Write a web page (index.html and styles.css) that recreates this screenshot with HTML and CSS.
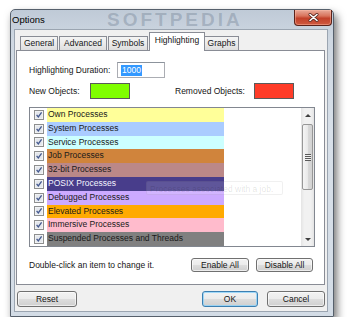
FILE: index.html
```html
<!DOCTYPE html>
<html>
<head>
<meta charset="utf-8">
<link rel="stylesheet" href="styles.css">
</head>
<body>
<div class="window">
  <div class="titlebar">
    <span class="title">Options</span>
    <span class="wm">SOFTPEDIA</span>
    <div class="close">
      <svg width="11" height="9" viewBox="0 0 11 9"><path d="M2 1.5 L9 7.5 M9 1.5 L2 7.5" stroke="#5a2a22" stroke-width="3" stroke-linecap="round"/><path d="M2 1.5 L9 7.5 M9 1.5 L2 7.5" stroke="#fff" stroke-width="1.6" stroke-linecap="round"/></svg>
    </div>
  </div>
  <div class="client">
    <div class="tabs">
      <div class="tab t-general">General</div>
      <div class="tab t-advanced">Advanced</div>
      <div class="tab t-symbols">Symbols</div>
      <div class="tab t-high active">Highlighting</div>
      <div class="tab t-graphs">Graphs</div>
    </div>
    <div class="panel">
      <div class="row1">
        <span class="lab lab-dur">Highlighting Duration:</span>
        <div class="input"><span class="sel">1000</span></div>
      </div>
      <div class="row2">
        <span class="lab lab-new">New Objects:</span>
        <span class="swatch green"></span>
        <span class="lab lab-rem">Removed Objects:</span>
        <span class="swatch red"></span>
      </div>
      <div class="list">
        <div class="items">
          <div class="item"><svg class="cb" viewBox="0 0 10 10"><rect x="0.5" y="0.5" width="9" height="9" fill="#fafafa" stroke="#8e8f8f"/><rect x="1.5" y="1.5" width="7" height="7" fill="#e4e7ec"/><path d="M2.6 4.8 L4.3 6.9 L7.6 2.4" stroke="#44598f" stroke-width="1.3" fill="none"/></svg><span class="lbl c1">Own Processes</span></div>
          <div class="item"><svg class="cb" viewBox="0 0 10 10"><rect x="0.5" y="0.5" width="9" height="9" fill="#fafafa" stroke="#8e8f8f"/><rect x="1.5" y="1.5" width="7" height="7" fill="#e4e7ec"/><path d="M2.6 4.8 L4.3 6.9 L7.6 2.4" stroke="#44598f" stroke-width="1.3" fill="none"/></svg><span class="lbl c2">System Processes</span></div>
          <div class="item"><svg class="cb" viewBox="0 0 10 10"><rect x="0.5" y="0.5" width="9" height="9" fill="#fafafa" stroke="#8e8f8f"/><rect x="1.5" y="1.5" width="7" height="7" fill="#e4e7ec"/><path d="M2.6 4.8 L4.3 6.9 L7.6 2.4" stroke="#44598f" stroke-width="1.3" fill="none"/></svg><span class="lbl c3">Service Processes</span></div>
          <div class="item"><svg class="cb" viewBox="0 0 10 10"><rect x="0.5" y="0.5" width="9" height="9" fill="#fafafa" stroke="#8e8f8f"/><rect x="1.5" y="1.5" width="7" height="7" fill="#e4e7ec"/><path d="M2.6 4.8 L4.3 6.9 L7.6 2.4" stroke="#44598f" stroke-width="1.3" fill="none"/></svg><span class="lbl c4">Job Processes</span></div>
          <div class="item"><svg class="cb" viewBox="0 0 10 10"><rect x="0.5" y="0.5" width="9" height="9" fill="#fafafa" stroke="#8e8f8f"/><rect x="1.5" y="1.5" width="7" height="7" fill="#e4e7ec"/><path d="M2.6 4.8 L4.3 6.9 L7.6 2.4" stroke="#44598f" stroke-width="1.3" fill="none"/></svg><span class="lbl c5">32-bit Processes</span></div>
          <div class="item"><svg class="cb" viewBox="0 0 10 10"><rect x="0.5" y="0.5" width="9" height="9" fill="#fafafa" stroke="#8e8f8f"/><rect x="1.5" y="1.5" width="7" height="7" fill="#e4e7ec"/><path d="M2.6 4.8 L4.3 6.9 L7.6 2.4" stroke="#44598f" stroke-width="1.3" fill="none"/></svg><span class="lbl c6">POSIX Processes</span></div>
          <div class="item"><svg class="cb" viewBox="0 0 10 10"><rect x="0.5" y="0.5" width="9" height="9" fill="#fafafa" stroke="#8e8f8f"/><rect x="1.5" y="1.5" width="7" height="7" fill="#e4e7ec"/><path d="M2.6 4.8 L4.3 6.9 L7.6 2.4" stroke="#44598f" stroke-width="1.3" fill="none"/></svg><span class="lbl c7">Debugged Processes</span></div>
          <div class="item"><svg class="cb" viewBox="0 0 10 10"><rect x="0.5" y="0.5" width="9" height="9" fill="#fafafa" stroke="#8e8f8f"/><rect x="1.5" y="1.5" width="7" height="7" fill="#e4e7ec"/><path d="M2.6 4.8 L4.3 6.9 L7.6 2.4" stroke="#44598f" stroke-width="1.3" fill="none"/></svg><span class="lbl c8">Elevated Processes</span></div>
          <div class="item"><svg class="cb" viewBox="0 0 10 10"><rect x="0.5" y="0.5" width="9" height="9" fill="#fafafa" stroke="#8e8f8f"/><rect x="1.5" y="1.5" width="7" height="7" fill="#e4e7ec"/><path d="M2.6 4.8 L4.3 6.9 L7.6 2.4" stroke="#44598f" stroke-width="1.3" fill="none"/></svg><span class="lbl c9">Immersive Processes</span></div>
          <div class="item"><svg class="cb" viewBox="0 0 10 10"><rect x="0.5" y="0.5" width="9" height="9" fill="#fafafa" stroke="#8e8f8f"/><rect x="1.5" y="1.5" width="7" height="7" fill="#e4e7ec"/><path d="M2.6 4.8 L4.3 6.9 L7.6 2.4" stroke="#44598f" stroke-width="1.3" fill="none"/></svg><span class="lbl c10">Suspended Processes and Threads</span></div>
        </div>
        <div class="scroll">
          <div class="sb-btn"><span class="arr-up"></span></div>
          <div class="sb-thumb"><span class="grip"></span></div>
          <div class="sb-track"></div>
          <div class="sb-btn"><span class="arr-down"></span></div>
        </div>
        <div class="tip">Processes associated with a job.</div>
      </div>
      <div class="row3">
        <span class="hint">Double-click an item to change it.</span>
        <button class="btn small b-enable">Enable All</button>
        <button class="btn small b-disable">Disable All</button>
      </div>
    </div>
    <div class="footer">
      <button class="btn b-reset">Reset</button>
      <div class="right">
        <button class="btn ok b-ok">OK</button>
        <button class="btn b-cancel">Cancel</button>
      </div>
    </div>
  </div>
</div>
</body>
</html>
```
FILE: styles.css
```css
html, body {
  margin: 0;
  padding: 0;
  background: #ffffff;
}
body {
  font-family: "Liberation Sans", Arial, sans-serif;
  font-size: 8.5px;
  color: #151515;
}
.window {
  box-sizing: border-box;
  width: 324px;
  height: 308px;
  margin: 9px 0 0 10px;
  border: 1px solid #56606c;
  border-radius: 5px 5px 0 0;
  background: linear-gradient(180deg, #bfcad7 0%, #cfd8e2 10%, #d8e0e9 40%, #d3dce6 100%);
  box-shadow: 3px 5px 9px rgba(0, 0, 0, 0.55);
  display: flex;
  flex-direction: column;
}
.titlebar {
  height: 19px;
  flex: none;
  display: flex;
  justify-content: space-between;
  align-items: flex-start;
  position: relative;
}
.title {
  padding-left: 1px;
  line-height: 20px;
  font-size: 9.5px;
  color: #000;
  position: relative;
  z-index: 1;
}
.wm {
  position: absolute;
  left: 96px;
  top: 0;
  font-size: 19px;
  font-weight: bold;
  letter-spacing: 3px;
  color: rgba(70, 88, 110, 0.26);
  line-height: 19px;
}
.close {
  box-sizing: border-box;
  width: 38px;
  height: 16px;
  margin-right: 1px;
  border: 1px solid #5b2219;
  border-top: none;
  border-radius: 0 0 4px 4px;
  background: linear-gradient(180deg, #e9ab9a 0%, #d8735c 40%, #c2412a 55%, #cf5a40 100%);
  box-shadow: inset 0 0 0 1px rgba(255, 190, 170, 0.45);
  display: flex;
  align-items: center;
  justify-content: center;
  position: relative;
  z-index: 1;
}
.client {
  flex: 1;
  margin: 0 5px 4px 3px;
  background: #f0f0f0;
  border: 1px solid #9ba5b1;
  display: flex;
  flex-direction: column;
}
.tabs {
  height: 20px;
  flex: none;
  display: flex;
  align-items: flex-end;
  padding-left: 5px;
  position: relative;
  z-index: 1;
}
.tab {
  box-sizing: border-box;
  height: 14px;
  border: 1px solid #898c95;
  border-bottom: none;
  background: linear-gradient(180deg, #f4f4f4 0%, #ebebeb 50%, #dedede 100%);
  text-align: center;
  line-height: 13px;
  margin-right: 1px;
}
.t-general { width: 38px; }
.t-advanced { width: 48px; }
.t-symbols { width: 40px; }
.t-high {
  width: 56px;
}
.t-graphs { width: 35px; margin-left: -1px; }
.tab.active {
  height: 19px;
  margin-bottom: -1px;
  background: #ffffff;
  line-height: 15px;
  margin-right: 0;
}
.panel {
  box-sizing: border-box;
  height: 235px;
  flex: none;
  margin: 0 2px 0 1px;
  border: 1px solid #898c95;
  background: #ffffff;
  padding: 11px 9px 0 12px;
}
.row1, .row2 {
  display: flex;
  align-items: center;
  height: 16px;
}
.row2 { margin-top: 5px; }
.lab-dur { width: 88px; }
.lab-new { width: 61px; }
.lab-rem { width: 79px; margin-left: 45px; }
.input {
  box-sizing: border-box;
  width: 48px;
  height: 16px;
  border: 1px solid #abadb3;
  border-top-color: #8c939c;
  background: #fff;
  padding: 2px 0 0 3px;
}
.sel {
  display: inline-block;
  background: #3399ff;
  color: #fff;
  line-height: 11px;
  padding: 0 1px;
}
.swatch {
  box-sizing: border-box;
  width: 40px;
  height: 16px;
  border: 1px solid #5a5a5a;
}
.green { background: #80ff00; }
.red { background: #ff3c28; }
.list {
  box-sizing: border-box;
  margin-top: 8px;
  width: 286px;
  height: 140px;
  border: 1px solid #828790;
  display: flex;
  position: relative;
  overflow: hidden;
}
.items {
  flex: 1;
}
.item {
  height: 13.8px;
  display: flex;
  align-items: center;
  padding-left: 4px;
}
.cb {
  width: 10px;
  height: 10px;
  margin-right: 3px;
  flex: none;
}
.lbl {
  box-sizing: border-box;
  width: 177px;
  height: 100%;
  padding-left: 1px;
  line-height: 13.8px;
  white-space: nowrap;
  overflow: hidden;
  color: #1a1a1a;
}
.c1 { background: #ffff99; }
.c2 { background: #aaccff; }
.c3 { background: #ccffff; }
.c4 { background: #d0843c; }
.c5 { background: #bb8888; }
.c6 { background: #483d8b; color: #f4f4ff; }
.c7 { background: #ccaaff; }
.c8 { background: #ffaa00; }
.c9 { background: #ffbbcc; }
.c10 { background: #808080; }
.scroll {
  width: 13px;
  flex: none;
  display: flex;
  flex-direction: column;
  background: linear-gradient(90deg, #e4e4e4 0%, #f1f1f1 25%, #f1f1f1 75%, #e4e4e4 100%);
}
.sb-btn {
  height: 14px;
  flex: none;
  display: flex;
  align-items: center;
  justify-content: center;
}
.arr-up, .arr-down {
  width: 0;
  height: 0;
  border-left: 3px solid transparent;
  border-right: 3px solid transparent;
}
.arr-up { border-bottom: 3px solid #404040; }
.arr-down { border-top: 3px solid #404040; }
.sb-thumb {
  box-sizing: border-box;
  height: 66px;
  flex: none;
  margin: 2px 1px 0 1px;
  border: 1px solid #979797;
  border-radius: 2px;
  background: linear-gradient(90deg, #f5f5f5 0%, #e9e9e9 50%, #dadada 51%, #d2d2d2 100%);
  display: flex;
  align-items: center;
  justify-content: center;
}
.grip {
  width: 6px;
  height: 7px;
  background: repeating-linear-gradient(180deg, #5a5a5a 0px, #5a5a5a 1px, #f0f0f0 1px, #f0f0f0 2px);
}
.sb-track { flex: 1; }
.tip {
  position: absolute;
  left: 116px;
  top: 73px;
  width: 137px;
  height: 14px;
  line-height: 14px;
  padding-left: 3px;
  box-sizing: border-box;
  border: 1px solid rgba(0, 0, 0, 0.06);
  border-radius: 2px;
  background: rgba(255, 255, 255, 0.13);
  color: rgba(0, 0, 0, 0.12);
  white-space: nowrap;
}
.row3 {
  display: flex;
  align-items: center;
  height: 14px;
  margin-top: 11px;
  padding-right: 2px;
}
.hint { flex: 1; }
.btn {
  box-sizing: border-box;
  height: 16px;
  border: 1px solid #707070;
  border-radius: 3px;
  background: linear-gradient(180deg, #f2f2f2 0%, #ebebeb 50%, #dddddd 51%, #cfcfcf 100%);
  box-shadow: inset 0 0 0 1px rgba(255, 255, 255, 0.6);
  font-family: "Liberation Sans", Arial, sans-serif;
  font-size: 8.5px;
  color: #151515;
  padding: 0;
  margin: 0;
  line-height: 12px;
}
.btn.small { height: 14px; }
.b-enable { width: 58px; margin-right: 7px; }
.b-disable { width: 57px; }
.footer {
  display: flex;
  justify-content: space-between;
  margin-top: 6px;
  padding: 0 2px;
}
.right { display: flex; }
.b-reset { width: 60px; }
.b-ok { width: 56px; margin-right: 9px; }
.b-cancel { width: 58px; }
.btn.ok {
  border-color: #3c7fb1;
  box-shadow: inset 0 0 0 1px rgba(140, 210, 250, 0.8);
}
```
